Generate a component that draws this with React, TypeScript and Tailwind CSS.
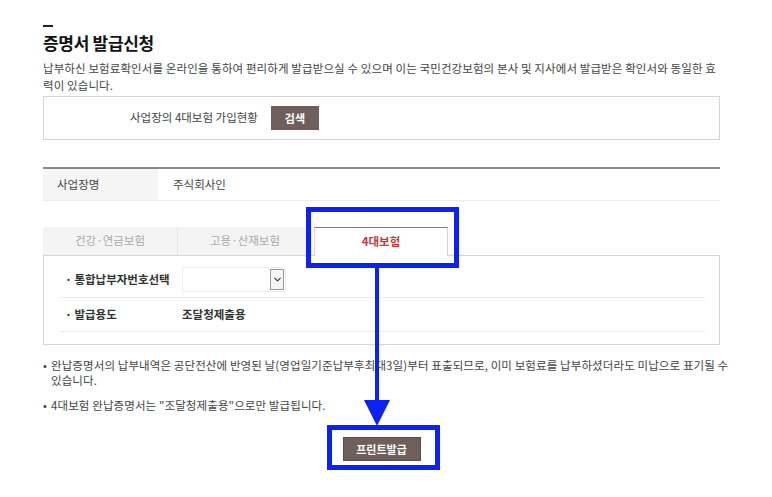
import React from 'react';
import { ChevronDown } from 'lucide-react';

const font = { fontFamily: '"Noto Sans CJK KR", "Noto Sans", sans-serif' };

const App: React.FC = () => {
  return (
    <div className="relative w-[772px] h-[497px] bg-white overflow-hidden text-[#333]" style={font}>
      <div className="pl-[43px] pt-[25px] w-[720px]">
        <div className="w-[10px] h-[2px] bg-[#222]" />
        <h1 className="mt-[7px] text-[17px] leading-[18px] font-bold text-[#111] tracking-[-0.3px]">증명서 발급신청</h1>
        <div className="mt-[8px] text-[11.5px] leading-[17px] text-[#444] whitespace-nowrap tracking-[0.1px]">
          <div>납부하신 보험료확인서를 온라인을 통하여 편리하게 발급받으실 수 있으며 이는 국민건강보험의 본사 및 지사에서 발급받은 확인서와 동일한 효</div>
          <div>력이 있습니다.</div>
        </div>

        <div className="mt-[2px] h-[44px] border border-[#d5d5d5] flex items-center pl-[86px]">
          <span className="text-[11.5px] text-[#444]">사업장의 4대보험 가입현황</span>
          <button className="ml-[13px] w-[48px] h-[24px] bg-[#6e5f5a] text-white text-[11px] font-bold">검색</button>
        </div>

        <div className="mt-[27px] border-t-2 border-[#8a8a8a] border-b border-b-[#ececec] flex h-[34px]">
          <div className="w-[115px] bg-[#f5f5f5] flex items-center pl-[14px] text-[11.5px] text-[#444]">사업장명</div>
          <div className="flex items-center pl-[15px] text-[11.5px] text-[#444]">주식회사인</div>
        </div>

        <div className="mt-[25px] flex items-end h-[29px]">
          <div className="w-[134px] h-[28px] bg-[#f4f4f4] flex items-center justify-center text-[11.5px] text-[#aaa]">건강·연금보험</div>
          <div className="w-[135px] h-[28px] bg-[#f4f4f4] border-l border-[#e6e6e6] flex items-center justify-center text-[11.5px] text-[#aaa]">고용·산재보험</div>
          <div className="ml-[2px] w-[134px] h-[29px] bg-white border-t border-t-[#d0585a] border-x border-x-[#d5d5d5] flex items-center justify-center text-[11.5px] font-bold text-[#c8383a] relative z-10 -mb-px">4대보험</div>
        </div>

        <div className="border border-[#d5d5d5] pl-[16px] pr-[14px] pb-[12px]">
          <div className="h-[42px] flex items-center pt-[6px] border-b border-[#ececec]">
            <div className="w-[122px] pl-[5px] text-[11.5px] font-bold text-[#333]">· 통합납부자번호선택</div>
            <div className="w-[104px] h-[25px] border border-[#eee] flex items-center justify-end pr-[1px]">
              <div className="w-[14px] h-[21px] border border-[#999] bg-[#f6f6f6] flex items-center justify-center">
                <ChevronDown size={11} strokeWidth={2.5} className="text-[#333]" />
              </div>
            </div>
          </div>
          <div className="h-[34px] flex items-center border-b border-[#ececec]">
            <div className="w-[122px] pl-[5px] text-[11.5px] font-bold text-[#333]">· 발급용도</div>
            <div className="text-[11.5px] font-bold text-[#333]">조달청제출용</div>
          </div>
        </div>

        <div className="mt-[13px] text-[11.5px] leading-[15px] text-[#444] whitespace-nowrap tracking-[0.1px]">
          <div className="flex">
            <span className="w-[8px] shrink-0">•</span>
            <div>
              <div>완납증명서의 납부내역은 공단전산에 반영된 날(영업일기준납부후최대3일)부터 표출되므로, 이미 보험료를 납부하셨더라도 미납으로 표기될 수</div>
              <div>있습니다.</div>
            </div>
          </div>
          <div className="flex mt-[10px]">
            <span className="w-[8px] shrink-0">•</span>
            <span>4대보험 완납증명서는 "조달청제출용"으로만 발급됩니다.</span>
          </div>
        </div>

        <div className="mt-[24px] flex justify-center">
          <button className="w-[78px] h-[24px] bg-[#6e5f5a] border border-[#5a4d48] text-white text-[11px] font-bold">프린트발급</button>
        </div>
      </div>

      {/* annotations */}
      <div className="absolute left-[306px] top-[207px] w-[153px] h-[61px] border-[5px] border-[#0b22f0] z-20" />
      <div className="absolute left-[375px] top-[267px] w-[4px] h-[136px] bg-[#0b22f0] z-20" />
      <svg className="absolute left-[364px] top-[400px] z-20" width="26" height="26" viewBox="0 0 26 26">
        <polygon points="0,0 26,0 13,26" fill="#0b22f0" />
      </svg>
      <div className="absolute left-[327px] top-[425px] w-[113px] h-[45px] border-[5px] border-[#0b22f0] z-20" />
    </div>
  );
};

export default App;
